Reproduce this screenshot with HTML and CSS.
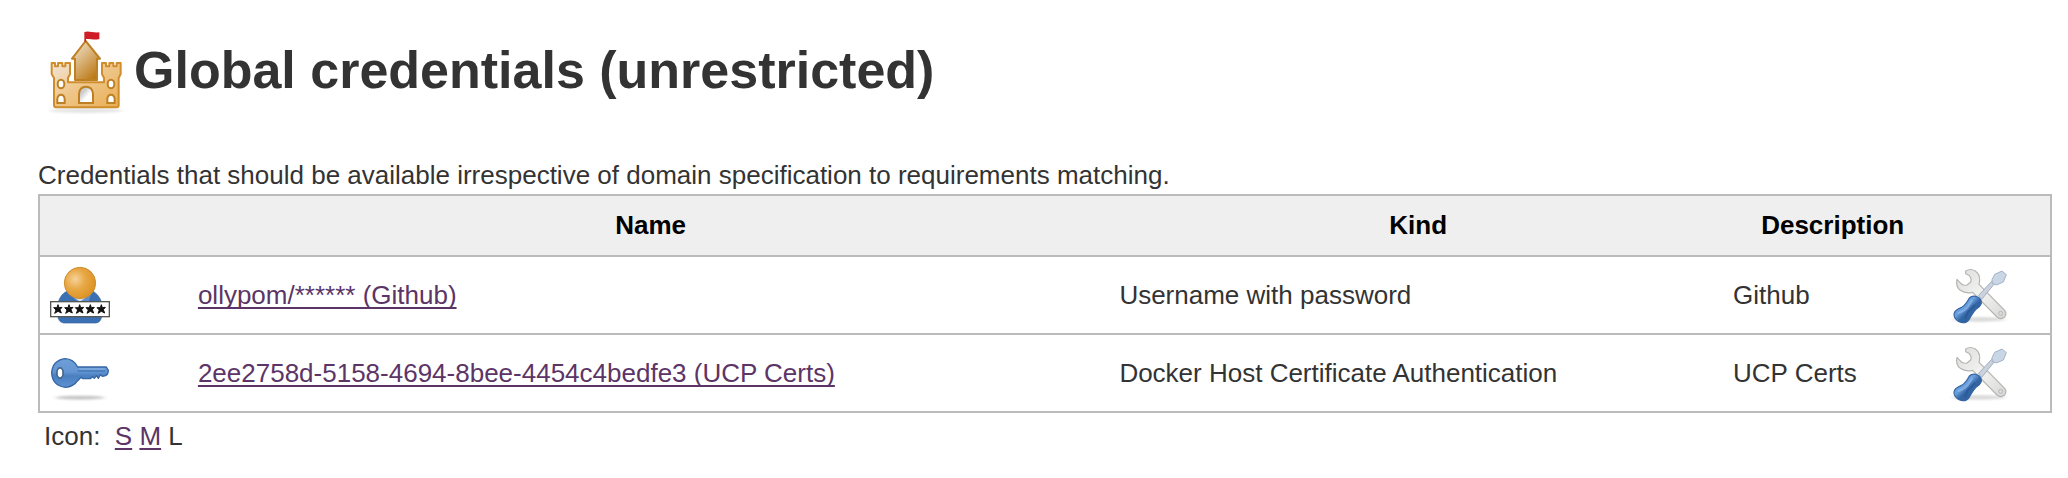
FILE: index.html
```html
<!DOCTYPE html>
<html lang="en">
<head>
<meta charset="utf-8">
<title>Global credentials (unrestricted)</title>
<link rel="stylesheet" href="styles.css">
</head>
<body>
<svg class="defs" width="0" height="0" aria-hidden="true">
  <defs>
    <filter id="soft" x="-20%" y="-100%" width="140%" height="300%"><feGaussianBlur stdDeviation="8 3"/></filter>
    <linearGradient id="steel" x1="0" y1="0" x2="1" y2="1"><stop offset="0" stop-color="#dcdcda"/><stop offset=".5" stop-color="#f3f3f2"/><stop offset="1" stop-color="#d6d6d4"/></linearGradient>
    <linearGradient id="grip" x1="0" y1="0" x2="1" y2="1"><stop offset="0" stop-color="#5d93d6"/><stop offset=".4" stop-color="#6a9fdd"/><stop offset=".55" stop-color="#3465a4"/><stop offset="1" stop-color="#2d5f9f"/></linearGradient>
    <symbol id="tools" viewBox="60 42 192 192">
      <ellipse cx="152" cy="211" rx="80" ry="7" fill="#000" opacity=".14" filter="url(#soft)"/>
      <path d="M113 66 Q127 57 142 66 Q156 76 155 94 L153 106 L230 184 Q238 195 229 205 Q218 213 207 204 L134 130 Q112 135 97 124 Q82 112 87 91 L96 101 Q103 111 117 108 L128 99 Q132 88 123 79 L113 74 Z" fill="url(#steel)" stroke="#b4b4b2" stroke-width="3.5" stroke-linejoin="round"/>
      <circle cx="218" cy="193" r="6" fill="#ddd" stroke="#b8b8b6" stroke-width="3"/>
      <path d="M151 140 L193 95 L201 102 L161 151 Z" fill="#cbd2df" stroke="#a4adbb" stroke-width="3"/>
      <path d="M192 92 L200 76 L222 66 L235 77 L226 99 L205 108 L193 103 Z" fill="#c9d6e5" stroke="#a5b3c4" stroke-width="3" stroke-linejoin="round"/>
      <path d="M124 147 Q134 138 148 144 Q162 150 160 164 Q157 173 144 181 Q135 190 123 212 Q115 223 103 221 Q86 218 79 203 Q76 193 83 185 Q91 178 101 175 Q113 168 124 147 Z" fill="url(#grip)" stroke="#3465a4" stroke-width="3.5"/>
      <path d="M91 192 Q108 187 119 174 L132 155" fill="none" stroke="#8db8ec" stroke-width="6" stroke-linecap="round" opacity=".7"/>
      <path d="M112 208 L119 190 L139 169" fill="none" stroke="#24528e" stroke-width="6" stroke-linecap="round" opacity=".55"/>
    </symbol>
  </defs>
</svg>
<main class="page">
  <h1 class="title">
    <svg class="title-icon" viewBox="45 30 240 255" aria-hidden="true">
      <defs>
        <linearGradient id="tower" x1="0" y1="0" x2=".7" y2="1"><stop offset="0" stop-color="#f4e8d9"/><stop offset=".45" stop-color="#dcb984"/><stop offset="1" stop-color="#bd7a17"/></linearGradient>
        <linearGradient id="wall" x1="0" y1="0" x2="1" y2="1"><stop offset="0" stop-color="#f2e6da"/><stop offset=".45" stop-color="#efc78c"/><stop offset="1" stop-color="#e9ad51"/></linearGradient>
        <linearGradient id="gate" x1="0" y1="0" x2="1" y2="1"><stop offset=".3" stop-color="#ccc"/><stop offset=".6" stop-color="#fff"/></linearGradient>
      </defs>
      <ellipse cx="168" cy="272" rx="110" ry="7" fill="#000" opacity=".1" filter="url(#soft)"/>
      <path d="M135 180 V116 H126 L167 63 L210 116 H201 V180 Z" fill="url(#tower)" stroke="#bd8023" stroke-width="6" stroke-linejoin="round"/>
      <path d="M163 36 Q173 33 184 36 Q197 38 208 37 V57 Q197 60 185 58 Q176 56 168 57 V65 H163 Z" fill="#cf1d27"/>
      <path d="M65 129 H75 V139 H84 V129 H97 V139 H106 V129 H120 V162 L114 174 V187 H222 V174 L216 162 V129 H228 V139 H238 V129 H250 V139 H260 V129 H272 V162 L266 174 V256 Q266 262 260 262 H78 Q72 262 72 256 V174 L65 162 Z" fill="url(#wall)" stroke="#cf8d2c" stroke-width="6" stroke-linejoin="round"/>
      <g fill="#fff" stroke="#bd8023" stroke-width="6">
        <ellipse cx="93" cy="192" rx="10" ry="13"/><ellipse cx="243" cy="192" rx="10" ry="13"/>
        <path d="M82 249 V236 Q84 224 93 224 Q102 224 104 236 V249 Z"/><path d="M232 249 V236 Q234 224 243 224 Q252 224 254 236 V249 Z"/>
        <path d="M147 249 V221 Q149 200 168 200 Q187 200 189 221 V249 Z" fill="url(#gate)"/>
      </g>
    </svg>
    Global credentials (unrestricted)
  </h1>
  <p class="intro">Credentials that should be available irrespective of domain specification to requirements matching.</p>
  <table class="credentials">
    <colgroup><col class="col-icon"><col class="col-name"><col class="col-kind"><col class="col-desc"><col></colgroup>
    <thead>
      <tr><th></th><th scope="col">Name</th><th scope="col">Kind</th><th scope="col">Description</th><th></th></tr>
    </thead>
    <tbody>
      <tr>
        <td>
          <svg class="icon" viewBox="54 27 192 192" role="img" aria-label="Username with password">
            <defs><radialGradient id="head" cx=".35" cy=".38" r=".65"><stop offset="0" stop-color="#f6d29a"/><stop offset=".5" stop-color="#e8a845"/><stop offset="1" stop-color="#dd9425"/></radialGradient></defs>
            <path d="M84 146 Q92 118 117 109 H184 Q207 120 215 146 V188 Q212 205 198 207 H101 Q87 205 84 190 Z" fill="#3b70b3" stroke="#3465a4" stroke-width="2"/>
            <path d="M116 116 L142 143 H176 L184 116 Z" fill="#5d8fce"/>
            <path d="M132 130 L150 143 L168 130 Z" fill="#dce8f5"/>
            <circle cx="150" cy="87" r="47" fill="url(#head)" stroke="#cf8d2c" stroke-width="3"/>
            <rect x="62" y="143" width="176" height="45" fill="#fff" stroke="#555753" stroke-width="4"/>
            <g fill="#111" stroke="#111" stroke-width="3" stroke-linejoin="round">
              <path id="star" d="M84 152 L87 161 L96 160 L90 167 L94 177 L84 172 L74 178 L78 168 L71 161 L81 161 Z"/>
              <use href="#star" x="33"/><use href="#star" x="65"/><use href="#star" x="97"/><use href="#star" x="130"/>
            </g>
          </svg>
        </td>
        <td><a class="link" href="#github">ollypom/****** (Github)</a></td>
        <td>Username with password</td>
        <td>Github</td>
        <td><a class="tool" href="#update-github" aria-label="Update Github"><svg class="icon" aria-hidden="true"><use href="#tools"/></svg></a></td>
      </tr>
      <tr>
        <td>
          <svg class="icon" viewBox="54 21 192 192" role="img" aria-label="Docker Host Certificate Authentication">
            <defs><linearGradient id="key" x1="0" y1="0" x2="0" y2="1"><stop offset="0" stop-color="#6f9fd8"/><stop offset=".45" stop-color="#6596d2"/><stop offset=".6" stop-color="#4a7fc0"/><stop offset="1" stop-color="#5e92d0"/></linearGradient></defs>
            <ellipse cx="150" cy="191" rx="74" ry="6" fill="#000" opacity=".22" filter="url(#soft)"/>
            <path fill-rule="evenodd" d="M106 74 Q130 75 143 99 H229 L235 109 Q235 121 227 125 L217 127 L211 122 L205 133 L199 125 L193 133 L187 128 L181 134 H159 L153 130 L143 140 Q130 159 106 160 Q67 155 65 117 Q67 79 106 74 Z M86 102 L81 111 V123 L86 132 H94 L99 123 V110 L94 102 Z" fill="url(#key)" stroke="#3465a4" stroke-width="4" stroke-linejoin="round"/>
            <path d="M143 111 H226" stroke="#3568aa" stroke-width="3"/>
            <path d="M148 105 H224" stroke="#8db5e4" stroke-width="3"/>
            <path d="M86 102 H94 L99 110 V123 L94 132 H86 L81 123 V111 Z" fill="none" stroke="#4d6780" stroke-width="3"/>
          </svg>
        </td>
        <td><a class="link" href="#ucp-certs">2ee2758d-5158-4694-8bee-4454c4bedfe3 (UCP Certs)</a></td>
        <td>Docker Host Certificate Authentication</td>
        <td>UCP Certs</td>
        <td><a class="tool" href="#update-ucp-certs" aria-label="Update UCP Certs"><svg class="icon" aria-hidden="true"><use href="#tools"/></svg></a></td>
      </tr>
    </tbody>
  </table>
  <div class="icon-size">Icon:&nbsp; <a class="link" href="#small">S</a> <a class="link" href="#medium">M</a> L</div>
</main>
</body>
</html>
```
FILE: styles.css
```css
body {
  margin: 0;
  background: #fff;
  color: #333;
  font: 26px/30px "Liberation Sans", Helvetica, Arial, sans-serif;
}

.defs {
  position: absolute;
}

.page {
  padding: 30px 16px 0 38px;
}

.title {
  display: flex;
  align-items: flex-start;
  gap: 9px;
  margin: 0 0 45px;
  padding-left: 7px;
  font-size: 52px;
  line-height: 80px;
}

.title-icon {
  flex: none;
  width: 80px;
  height: 85px;
}

.intro {
  margin: 0 0 4px;
}

.credentials {
  width: 100%;
  table-layout: fixed;
  border-collapse: collapse;
  border: 2px solid #bbb;
}

.col-icon { width: 7.5%; }
.col-name { width: 45.8%; }
.col-kind { width: 30.5%; }
.col-desc { width: 10.7%; }

.credentials tr {
  border-top: 2px solid #bbb;
}

.credentials th {
  padding: 14px 8px 15px;
  background: #efefef;
  color: #000;
}

.credentials td {
  padding: 6px 8px;
}

.icon {
  display: block;
  width: 64px;
  height: 64px;
}

.tool {
  display: inline-block;
  vertical-align: top;
}

.link {
  color: #5c3566;
  text-decoration: underline;
  text-decoration-thickness: 2px;
  text-underline-offset: 3px;
  text-decoration-skip-ink: none;
}

.icon-size {
  padding: 8px 6px;
}
```
